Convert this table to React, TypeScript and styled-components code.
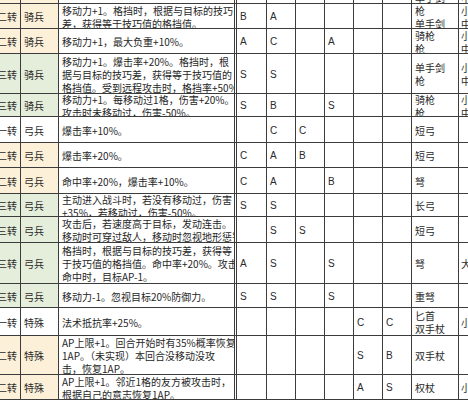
import React from "react";
import styled, { createGlobalStyle } from "styled-components";

const GlobalStyle = createGlobalStyle`
  html, body {
    margin: 0;
    padding: 0;
    background: #ffffff;
    overflow: hidden;
  }
  body {
    font-family: "Noto Sans CJK SC", "Noto Sans", "DejaVu Sans", sans-serif;
    color: #2a2a2a;
  }
`;

type Tone = "white" | "cream" | "green";

const toneColor: Record<Tone, string> = {
  white: "#ffffff",
  cream: "#fdf0d9",
  green: "#e5eedb",
};

const LINE = "#3c3c3c";

const Sheet = styled.div`
  margin: -22px 0 0 -10px;
  display: flex;
  flex-direction: column;
  width: 540px;
`;

const Row = styled.div<{ $h: number }>`
  display: grid;
  grid-template-columns: 31px 38px 178px 30px 29px 29px 29px 29px 29px 47px 70px;
  height: ${(p) => p.$h}px;
  box-sizing: border-box;
  border-bottom: 1px solid ${LINE};
`;

const Cell = styled.div<{ $tone?: Tone; $pad?: string; $right?: boolean }>`
  box-sizing: border-box;
  height: 100%;
  border-right: 1px solid ${LINE};
  background: ${(p) => toneColor[p.$tone ?? "white"]};
  overflow: hidden;
  display: flex;
  flex-direction: column;
  justify-content: center;
  align-items: ${(p) => (p.$right ? "flex-end" : "flex-start")};
  padding: 1px ${(p) => p.$pad ?? "0 0 2px"};
  padding-top: 1px;
  font-size: 10px;
  line-height: 13px;
  white-space: nowrap;
`;

const RankCell = styled(Cell)`
  padding: 1px 3px 0 0;
`;

const TypeCell = styled(Cell)`
  padding: 1px 0 0 3px;
`;

const DescCell = styled(Cell)`
  border-right: 3px double ${LINE};
  padding: 1px 0 0 3px;
  color: #262626;
`;

const GradeCell = styled(Cell)`
  padding: 1px 0 0 3px;
  font-family: "Liberation Sans", "Noto Sans", sans-serif;
  font-size: 10px;
`;

const WeaponCell = styled(Cell)`
  padding: 1px 0 0 3px;
`;

const SizeCell = styled(Cell)`
  padding: 1px 0 0 2px;
  border-right: none;
`;

const Line = styled.span`
  display: block;
  flex-shrink: 0;
`;

type RowData = {
  h: number;
  rank: string;
  type: string;
  desc: string[];
  grades: string[];
  weapon: string[];
  size: string[];
};

const rows: RowData[] = [
  { h: 26, rank: "二转", type: "骑兵", desc: ["移动力+1。"], grades: ["", "", "", "", "", ""], weapon: ["骑枪", "单手剑"], size: ["小", "中"] },
  { h: 25, rank: "二转", type: "骑兵", desc: ["移动力+1。格挡时，根据与目标的技巧", "差，获得等于技巧值的格挡值。"], grades: ["B", "A", "", "", "", ""], weapon: ["枪", "单手剑"], size: ["小", "中"] },
  { h: 25, rank: "二转", type: "骑兵", desc: ["移动力+1，最大负重+10%。"], grades: ["A", "C", "", "A", "", ""], weapon: ["骑枪", "枪"], size: ["小", "中"] },
  { h: 40, rank: "三转", type: "骑兵", desc: ["移动力+1。爆击率+20%。格挡时，根", "据与目标的技巧差，获得等于技巧值的", "格挡值。受到远程攻击时，格挡率+50%"], grades: ["S", "S", "", "", "", ""], weapon: ["单手剑", "枪"], size: ["小", "中"] },
  { h: 23, rank: "三转", type: "骑兵", desc: ["移动力+1。每移动过1格，伤害+20%。", "攻击时未移动过，伤害-50%。"], grades: ["S", "B", "", "S", "", ""], weapon: ["骑枪", "枪"], size: ["小", "中"] },
  { h: 26, rank: "一转", type: "弓兵", desc: ["爆击率+10%。"], grades: ["", "C", "C", "", "", ""], weapon: ["短弓"], size: [] },
  { h: 25, rank: "二转", type: "弓兵", desc: ["爆击率+20%。"], grades: ["C", "A", "B", "", "", ""], weapon: ["短弓"], size: [] },
  { h: 26, rank: "二转", type: "弓兵", desc: ["命中率+20%，爆击率+10%。"], grades: ["C", "A", "", "B", "", ""], weapon: ["弩"], size: [] },
  { h: 23, rank: "三转", type: "弓兵", desc: ["主动进入战斗时，若没有移动过，伤害", "+35%，若移动过，伤害-50%。"], grades: ["S", "S", "", "", "", ""], weapon: ["长弓"], size: [] },
  { h: 26, rank: "三转", type: "弓兵", desc: ["攻击后，若速度高于目标，发动连击。", "移动时可穿过敌人，移动时忽视地形惩罚"], grades: ["", "S", "S", "", "", ""], weapon: ["短弓"], size: [] },
  { h: 41, rank: "三转", type: "弓兵", desc: ["格挡时，根据与目标的技巧差，获得等", "于技巧值的格挡值。命中率+20%。攻击", "命中时，目标AP-1。"], grades: ["A", "S", "", "S", "", ""], weapon: ["弩"], size: ["大"] },
  { h: 24, rank: "三转", type: "弓兵", desc: ["移动力-1。忽视目标20%防御力。"], grades: ["S", "S", "", "S", "", ""], weapon: ["重弩"], size: [] },
  { h: 28, rank: "一转", type: "特殊", desc: ["法术抵抗率+25%。"], grades: ["", "", "", "", "C", "C"], weapon: ["匕首", "双手杖"], size: ["小"] },
  { h: 39, rank: "二转", type: "特殊", desc: ["AP上限+1。回合开始时有35%概率恢复", "1AP。（未实现）本回合没移动没攻", "击，恢复1AP。"], grades: ["", "", "", "", "S", "B"], weapon: ["双手杖"], size: [] },
  { h: 25, rank: "二转", type: "特殊", desc: ["AP上限+1。邻近1格的友方被攻击时，", "根据自己的意志恢复1AP。"], grades: ["", "", "", "", "A", "S"], weapon: ["权杖"], size: ["小"] },
  { h: 26, rank: "二转", type: "特殊", desc: ["AP上限+1。"], grades: ["", "", "", "", "", ""], weapon: ["杖"], size: [] },
];

const toneFor = (rank: string): Tone =>
  rank === "二转" ? "cream" : rank === "三转" ? "green" : "white";

const Lines: React.FC<{ items: string[] }> = ({ items }) => (
  <>
    {items.map((t, i) => (
      <Line key={i}>{t}</Line>
    ))}
  </>
);

export default function App() {
  return (
    <>
      <GlobalStyle />
      <Sheet>
        {rows.map((r, i) => {
          const tone = toneFor(r.rank);
          return (
            <Row key={i} $h={r.h}>
              <RankCell $tone={tone} $right>
                <Line>{r.rank}</Line>
              </RankCell>
              <TypeCell $tone={tone}>
                <Line>{r.type}</Line>
              </TypeCell>
              <DescCell>
                <Lines items={r.desc} />
              </DescCell>
              {r.grades.map((g, j) => (
                <GradeCell key={j}>
                  <Line>{g}</Line>
                </GradeCell>
              ))}
              <WeaponCell>
                <Lines items={r.weapon} />
              </WeaponCell>
              <SizeCell>
                <Lines items={r.size} />
              </SizeCell>
            </Row>
          );
        })}
      </Sheet>
    </>
  );
}
